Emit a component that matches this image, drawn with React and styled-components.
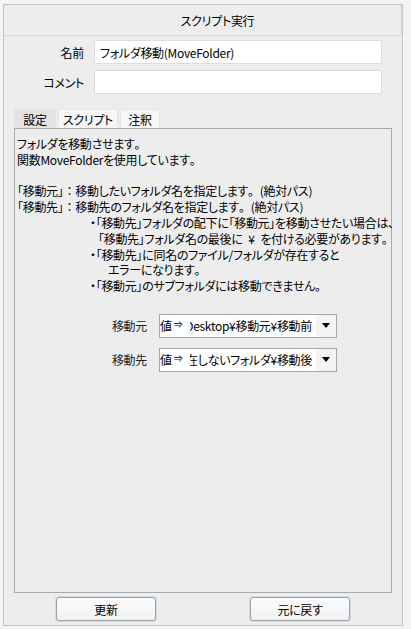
import React from "react";
import styled, { createGlobalStyle } from "styled-components";

const Global = createGlobalStyle`
  html, body { margin: 0; padding: 0; background: #f3f3f3; }
  body {
    font-family: "Noto Sans CJK JP", "Noto Sans", sans-serif;
    font-size: 12px;
    color: #000;
    font-feature-settings: "palt";
    letter-spacing: -0.3px;
  }
  * { box-sizing: border-box; }
`;

const Frame = styled.div`
  margin: 4px 0 0 3px;
  width: 400px;
  border: 1px solid #c4c4c4;
  background: #ededed;
  display: flex;
  flex-direction: column;
`;

const TitleBar = styled.div`
  height: 31px;
  border-bottom: 1px solid #d6d6d6;
  border-right: 1px solid #d6d6d6;
  display: flex;
  align-items: center;
  justify-content: center;
  padding-left: 30px;
`;

const Form = styled.div`
  display: grid;
  grid-template-columns: 80px 288px;
  column-gap: 10px;
  row-gap: 6px;
  margin-top: 4px;
`;

const Label = styled.div`
  text-align: right;
  align-self: center;
`;

const Input = styled.div`
  height: 24px;
  background: #fff;
  border: 1px solid #dcdcdc;
  padding-left: 5px;
  display: flex;
  align-items: center;
`;

const Tabs = styled.div`
  display: flex;
  gap: 2px;
  margin: 15px 0 0 10px;
  height: 19px;
`;

const Tab = styled.div`
  width: ${(p) => p.$w}px;
  height: 19px;
  display: flex;
  align-items: center;
  justify-content: center;
  background: ${(p) => (p.$active ? "#e3e3e3" : "#f6f6f6")};
  border: 1px solid ${(p) => (p.$active ? "#e3e3e3" : "#e6e6e6")};
  border-bottom: none;
`;

const Panel = styled.div`
  margin: 0 10px;
  height: 465px;
  border: 1px solid #a9a9a9;
  padding: 7px 2px 0 2px;
`;

const Desc = styled.div`
  line-height: 15.8px;
  white-space: pre;
`;

const Line = styled.div`
  height: 15.8px;
  padding-left: ${(p) => p.$indent || 0}px;
`;

const Full = styled.span`
  font-feature-settings: normal;
`;

const Combos = styled.div`
  display: grid;
  grid-template-columns: 47px 178px;
  column-gap: 12px;
  row-gap: 10px;
  margin: 20px 0 0 83px;
`;

const ComboLabel = styled.div`
  text-align: right;
  align-self: center;
  color: #222;
`;

const Combo = styled.div`
  height: 24px;
  border: 1px solid #a8a8a8;
  display: flex;
  background: #fff;
`;

const ComboText = styled.div`
  flex: 1;
  display: flex;
  align-items: center;
  overflow: hidden;
  white-space: nowrap;
`;

const Prefix = styled.span`
  flex: none;
  display: flex;
  align-items: center;
  padding-right: 8px;
`;

const SmallArrow = styled.span`
  font-size: 9px;
  margin-left: 2px;
  position: relative;
  top: -1px;
`;

const Clip = styled.span`
  flex: 1;
  display: flex;
  justify-content: flex-end;
  overflow: hidden;
  padding-right: 4px;
`;

const Arrow = styled.div`
  width: 20px;
  background: #f4f4f4;
  display: flex;
  align-items: center;
  justify-content: center;
  &::after {
    content: "";
    border-left: 4px solid transparent;
    border-right: 4px solid transparent;
    border-top: 5px solid #000;
  }
`;

const Buttons = styled.div`
  display: flex;
  justify-content: center;
  gap: 94px;
  padding: 4px 0 4px;
`;

const Button = styled.button`
  width: 100px;
  height: 24px;
  font: inherit;
  letter-spacing: inherit;
  color: #000;
  background: linear-gradient(#fbfbfb, #f1f1f1);
  border: 1px solid #9aa0a6;
  border-radius: 3px;
  box-shadow: 0 0 0 1px rgba(170, 200, 230, 0.45);
  padding: 0;
`;

const lines = [
  ["フォルダを移動させます。", 0],
  ["関数MoveFolderを使用しています。", 0],
  ["", 0],
  ["「移動元」：移動したいフォルダ名を指定します。(絶対パス)", 0],
  ["「移動先」：移動先のフォルダ名を指定します。(絶対パス)", 0],
  ["・「移動先」フォルダの配下に「移動元」を移動させたい場合は、", 73],
  ["「移動先」フォルダ名の最後に\u2002¥\u2002を付ける必要があります。", 81],
  ["・「移動先」に同名のファイル/フォルダが存在すると", 73],
  ["エラーになります。", 91],
  ["・「移動元」のサブフォルダには移動できません。", 73],
];

const renderText = (t) =>
  t.split(/([：。])/).map((part, i) =>
    part === "：" || part === "。" ? <Full key={i}>{part}</Full> : part
  );

const ComboBox = ({ value }) => (
  <Combo>
    <ComboText>
      <Prefix>
        値<SmallArrow>⇒</SmallArrow>
      </Prefix>
      <Clip>{value}</Clip>
    </ComboText>
    <Arrow />
  </Combo>
);

export default function App() {
  return (
    <>
      <Global />
      <Frame>
        <TitleBar>スクリプト実行</TitleBar>
        <Form>
          <Label>名前</Label>
          <Input>フォルダ移動(MoveFolder)</Input>
          <Label>コメント</Label>
          <Input />
        </Form>
        <Tabs>
          <Tab $w={42} $active>設定</Tab>
          <Tab $w={60}>スクリプト</Tab>
          <Tab $w={40}>注釈</Tab>
        </Tabs>
        <Panel>
          <Desc>
            {lines.map(([t, i], k) => (
              <Line key={k} $indent={i}>{renderText(t)}</Line>
            ))}
          </Desc>
          <Combos>
            <ComboLabel>移動元</ComboLabel>
            <ComboBox value="C:¥Users¥user¥Desktop¥移動元¥移動前" />
            <ComboLabel>移動先</ComboLabel>
            <ComboBox value="C:¥存在しないフォルダ¥移動後" />
          </Combos>
        </Panel>
        <Buttons>
          <Button>更新</Button>
          <Button>元に戻す</Button>
        </Buttons>
      </Frame>
    </>
  );
}
